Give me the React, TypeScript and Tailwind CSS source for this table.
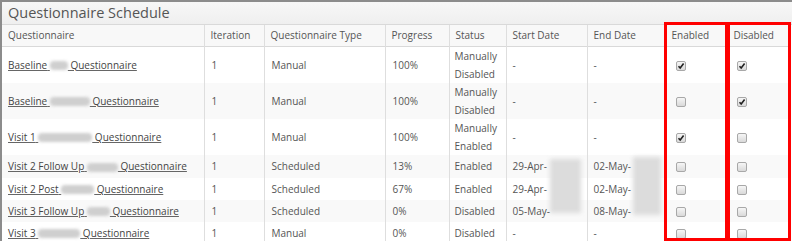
import React from 'react';

// Checkbox glyph used in the Enabled / Disabled columns
const Check: React.FC<{ checked?: boolean }> = ({ checked }) => (
  <span className="inline-flex items-center justify-center w-[10px] h-[10px] rounded-[2px] border border-[#a8a8a8] bg-gradient-to-b from-[#f6f6f6] to-[#d9d9d9] align-middle">
    {checked && (
      <svg width="8" height="8" viewBox="0 0 8 8">
        <path d="M1.5 4.2 L3.2 6 L6.6 1.6" stroke="#222" strokeWidth="1.6" fill="none" />
      </svg>
    )}
  </span>
);

// Smudged-out part of a name
const Blur: React.FC<{ w: number }> = ({ w }) => (
  <span
    className="inline-block h-[9px] bg-[#cfcfcf] blur-[1.5px] rounded-sm align-middle"
    style={{ width: w }}
  />
);

type Row = {
  pre: string;
  blur: number;
  type: string;
  progress: string;
  status: React.ReactNode;
  start: string;
  end: string;
  enabled: boolean;
  disabled: boolean;
  h: string;
};

const rows: Row[] = [
  { pre: 'Baseline', blur: 18, type: 'Manual', progress: '100%', status: <>Manually<br />Disabled</>, start: '-', end: '-', enabled: true, disabled: true, h: 'h-[36px]' },
  { pre: 'Baseline', blur: 40, type: 'Manual', progress: '100%', status: <>Manually<br />Disabled</>, start: '-', end: '-', enabled: false, disabled: true, h: 'h-[36px]' },
  { pre: 'Visit 1', blur: 54, type: 'Manual', progress: '100%', status: <>Manually<br />Enabled</>, start: '-', end: '-', enabled: true, disabled: false, h: 'h-[36px]' },
  { pre: 'Visit 2 Follow Up', blur: 31, type: 'Scheduled', progress: '13%', status: 'Enabled', start: '29-Apr-', end: '02-May-', enabled: false, disabled: false, h: 'h-[23px]' },
  { pre: 'Visit 2 Post', blur: 33, type: 'Scheduled', progress: '67%', status: 'Enabled', start: '29-Apr-', end: '02-May-', enabled: false, disabled: false, h: 'h-[22px]' },
  { pre: 'Visit 3 Follow Up', blur: 23, type: 'Scheduled', progress: '0%', status: 'Disabled', start: '05-May-', end: '08-May-', enabled: false, disabled: false, h: 'h-[22px]' },
  { pre: 'Visit 3', blur: 42, type: 'Manual', progress: '0%', status: 'Disabled', start: '-', end: '-', enabled: false, disabled: false, h: 'h-[22px]' },
];

const headers = ['Questionnaire', 'Iteration', 'Questionnaire Type', 'Progress', 'Status', 'Start Date', 'End Date', 'Enabled', 'Disabled'];
const widths = [202, 60, 121, 64, 57, 81, 78, 62, 63];

export default function App() {
  return (
    <div className="relative w-[792px] h-[241px] overflow-hidden bg-white font-['Open_Sans',sans-serif] text-[#555]">
      <div className="border-l-2 border-t-2 border-[#8c8c8c] h-full">
        {/* Panel title */}
        <div className="h-[23px] bg-gradient-to-b from-[#f7f7f7] to-[#efefef] border-b border-[#d9d9d9] pl-[6px] text-[14.5px] leading-[21px] text-[#555]">
          Questionnaire Schedule
        </div>

        <table className="table-fixed border-collapse text-[10px] leading-[16px]">
          <colgroup>
            {widths.map((w, i) => (
              <col key={i} style={{ width: w }} />
            ))}
          </colgroup>
          <thead>
            <tr className="h-[21px] bg-[#f8f8f8] border-b border-[#d9d9d9]">
              {headers.map((h, i) => (
                <th key={h} className={`font-normal text-left px-[6px] ${i > 0 ? 'border-l border-[#dedede]' : ''}`}>
                  {h}
                </th>
              ))}
            </tr>
          </thead>
          <tbody>
            {rows.map((r, i) => (
              <tr key={i} className={`${r.h} ${i % 2 === 1 ? 'bg-[#f9f9f9]' : 'bg-white'}`}>
                <td className="px-[6px] whitespace-nowrap">
                  <a className="underline text-[#444] decoration-[#666]">
                    {r.pre} <Blur w={r.blur} /> Questionnaire
                  </a>
                </td>
                <td className="px-[7px] border-l border-[#dedede]">1</td>
                <td className="px-[7px] border-l border-[#dedede]">{r.type}</td>
                <td className="px-[7px] border-l border-[#dedede]">{r.progress}</td>
                <td className="px-[5px] border-l border-[#dedede] leading-[18px]">{r.status}</td>
                <td className="px-[6px] border-l border-[#dedede] relative">
                  {r.start}
                  {i === 3 && (
                    <span className="absolute left-[43px] top-[4px] w-[31px] h-[54px] bg-[#dcdcdc] blur-[2px]" />
                  )}
                </td>
                <td className="px-[6px] border-l border-[#dedede] relative">
                  {r.end}
                  {i === 3 && (
                    <span className="absolute left-[45px] top-[2px] w-[28px] h-[58px] bg-[#dcdcdc] blur-[2px]" />
                  )}
                </td>
                <td className="px-[10px] border-l border-[#dedede]">
                  <Check checked={r.enabled} />
                </td>
                <td className="px-[9px] border-l border-[#dedede]">
                  <Check checked={r.disabled} />
                </td>
              </tr>
            ))}
          </tbody>
        </table>
      </div>

      {/* Highlight boxes */}
      <div className="absolute left-[664px] top-[22px] w-[64px] h-[219px] border-[3px] border-[#ff0000]" />
      <div className="absolute left-[727px] top-[22px] w-[64px] h-[219px] border-[3px] border-[#ff0000]" />
    </div>
  );
}
